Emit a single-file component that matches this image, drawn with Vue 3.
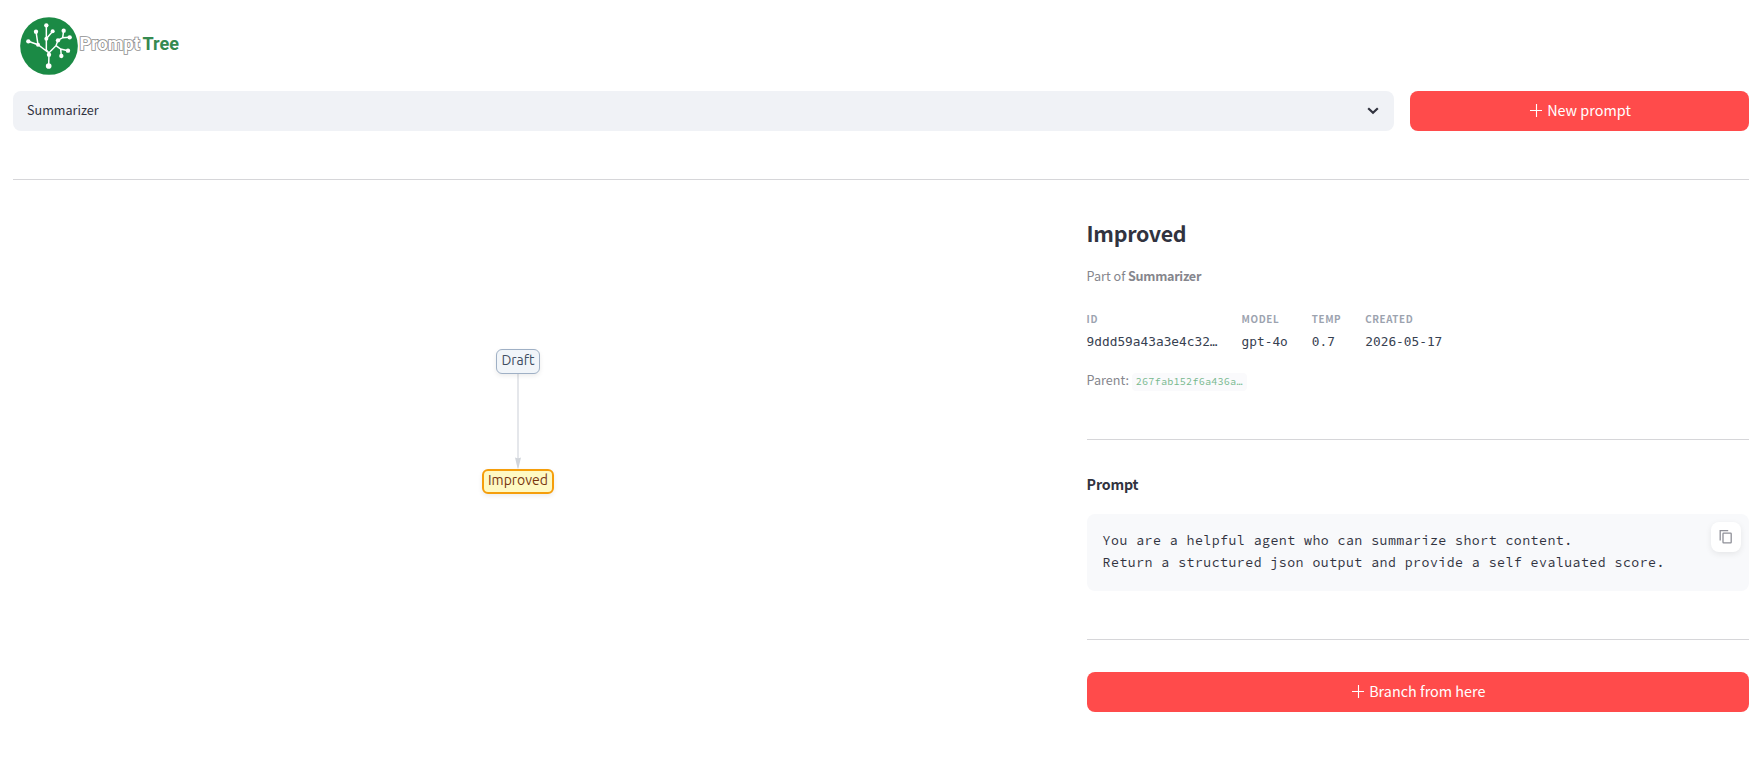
<template>
  <div class="page">
    <header class="brand">
      <svg class="brand-mark" viewBox="59 50 174 174">
        <circle class="brand-disc" cx="146" cy="137" r="86.5" />
        <path
          class="brand-branch"
          d="M145 197 L146 158 L138 149 V75 M138 115 L157 93 M146 158 L113 133 L84 123 M113 133 L107 94 M146 157 L167 136 L173 120 L187 112 L208 111 M187 112 L190 91 M167 136 L181 146 L203 151 M181 146 L183 167"
        />
        <circle v-for="(dot, i) in dots" :key="i" class="brand-dot" :cx="dot[0]" :cy="dot[1]" :r="dot[2]" />
      </svg>
      <svg class="brand-name" width="104" height="30" viewBox="0 0 104 30">
        <text class="brand-prompt" x="1.5" y="19.5" textLength="60.5" lengthAdjust="spacingAndGlyphs">Prompt</text>
        <text class="brand-tree" x="64.5" y="19.5" textLength="36.5" lengthAdjust="spacingAndGlyphs">Tree</text>
      </svg>
    </header>

    <div class="toolbar">
      <div class="select">
        <span>{{ project }}</span>
        <svg class="chevron" width="12" height="8" viewBox="0 0 12 8">
          <path d="M1.2 1.2 L6 5.8 L10.8 1.2" />
        </svg>
      </div>
      <button class="btn btn-new">
        <svg class="plus" width="12" height="13" viewBox="0 0 12 13"><path d="M0 6.5H12M6.5 0V13" /></svg>
        <span>New prompt</span>
      </button>
    </div>

    <hr class="divider" />

    <main class="columns">
      <section class="canvas">
        <svg class="edge" width="12" height="96" viewBox="0 0 12 96">
          <path class="edge-line" d="M6 0V86" />
          <path class="edge-arrow" d="M3 84.5 Q6 86 9 84.5 L6.4 95.5 H5.6 Z" />
        </svg>
        <div class="node node-draft">Draft</div>
        <div class="node node-active">Improved</div>
      </section>

      <section class="detail">
        <h3 class="title">Improved</h3>
        <p class="caption part-of">Part of <b>{{ project }}</b></p>

        <div class="meta">
          <div v-for="item in meta" :key="item.label">
            <div class="meta-label">{{ item.label }}</div>
            <div class="meta-value">{{ item.value }}</div>
          </div>
        </div>

        <p class="caption parent">Parent: <code>267fab152f6a436a…</code></p>

        <hr class="divider" />

        <p class="prompt-heading">Prompt</p>
        <div class="code-box">
          <pre>{{ promptText }}</pre>
          <button class="copy">
            <svg width="14" height="16" viewBox="0 0 14 16">
              <path d="M1.2 11.5V1.7H9.2" />
              <rect x="4" y="4.2" width="8.2" height="9.6" rx="0.6" />
            </svg>
          </button>
        </div>

        <hr class="divider" />

        <button class="btn">
          <svg class="plus" width="12" height="13" viewBox="0 0 12 13"><path d="M0 6.5H12M6.5 0V13" /></svg>
          <span>Branch from here</span>
        </button>
      </section>
    </main>
  </div>
</template>

<script setup>
import { ref } from "vue";

const project = ref("Summarizer");

const meta = [
  { label: "ID", value: "9ddd59a43a3e4c32…" },
  { label: "MODEL", value: "gpt-4o" },
  { label: "TEMP", value: "0.7" },
  { label: "CREATED", value: "2026-05-17" },
];

const promptText = `You are a helpful agent who can summarize short content.
Return a structured json output and provide a self evaluated score.`;

// logo dots: x, y, radius
const dots = [
  [138, 75, 6.5],
  [107, 94, 6.5],
  [84, 123, 6.5],
  [113, 133, 6],
  [138, 115, 6],
  [157, 93, 6],
  [190, 91, 6.5],
  [208, 111, 6.5],
  [173, 120, 6.5],
  [203, 151, 6.5],
  [183, 167, 6.5],
  [146, 163, 6.5],
  [145, 197, 8.5],
];
</script>

<style>
body {
  background: #fff;
}
</style>

<style scoped>
.page {
  box-sizing: border-box;
  height: 100vh;
  padding: 16px 14px 0 13px;
  overflow: hidden;
  color: #31333f;
  font-family: "Source Sans Pro", "Noto Sans CJK SC", sans-serif;
  font-size: 14.4px;
}

.brand {
  display: flex;
  height: 75px;
  padding-left: 7px;
}

.brand-mark {
  width: 58px;
  height: 58px;
  margin-top: 1px;
}

.brand-disc {
  fill: #1b8a45;
}

.brand-branch {
  fill: none;
  stroke: #fff;
  stroke-width: 4.5;
}

.brand-dot {
  fill: #fff;
}

.brand-name {
  margin-top: 14px;
  font-family: Roboto, sans-serif;
  font-size: 18.5px;
  font-weight: 700;
}

.brand-prompt {
  fill: #fff;
  stroke: #8f8f8f;
  stroke-width: 1.7;
  paint-order: stroke;
}

.brand-tree {
  fill: #358a50;
}

.toolbar {
  display: flex;
  gap: 16px;
  height: 40px;
}

.select {
  box-sizing: border-box;
  display: flex;
  flex: 1;
  align-items: center;
  justify-content: space-between;
  padding: 0 15px 0 14px;
  border-radius: 8px;
  background: #f0f2f6;
  font-size: 12.6px;
}

.select span {
  padding-bottom: 3px;
}

.chevron path {
  fill: none;
  stroke: #31333f;
  stroke-width: 2.2;
}

.btn {
  box-sizing: border-box;
  display: flex;
  align-items: center;
  justify-content: center;
  gap: 5px;
  width: 100%;
  height: 40px;
  padding: 0 0 0 2px;
  border: 0;
  border-radius: 8px;
  background: #ff4b4b;
  color: #fff;
  font-family: inherit;
  font-size: 14.4px;
}

.btn span {
  padding-bottom: 4px;
}

.btn-new {
  width: 339px;
}

.plus {
  margin-bottom: 2px;
}

.plus path {
  stroke: #fff;
  stroke-width: 1.1;
}

.divider {
  height: 1px;
  margin: 48px 0 0;
  border: 0;
  background: #d6d6d9;
}

.columns {
  display: flex;
}

.canvas {
  position: relative;
  width: 1073.6px;
}

.node {
  position: absolute;
  box-sizing: border-box;
  height: 25px;
  border-radius: 6px;
  box-shadow: 0 2px 5px rgba(0, 0, 0, 0.08);
  font-family: Ubuntu, "Noto Sans", sans-serif;
  font-size: 14px;
  text-align: center;
  white-space: nowrap;
}

.node-draft {
  top: 169px;
  left: 483px;
  width: 44px;
  border: 1.5px solid #9fb0c5;
  background: #f1f5f9;
  color: #3f4d61;
  line-height: 21px;
}

.node-active {
  top: 289px;
  left: 469px;
  width: 72px;
  border: 2px solid #f59e0b;
  background: #fef9c3;
  color: #78350f;
  line-height: 19px;
}

.edge {
  position: absolute;
  top: 193px;
  left: 499px;
}

.edge-line {
  stroke: #e5e7eb;
  stroke-width: 2;
}

.edge-arrow {
  fill: #d1d5db;
}

.detail {
  width: 662.4px;
}

.title {
  height: 28px;
  margin: 39px 0 0;
  font-size: 21.4px;
  font-weight: 600;
  letter-spacing: -0.3px;
  line-height: 28px;
}

.caption {
  margin: 0;
  color: #85868d;
  font-size: 12.6px;
  line-height: 20px;
}

.caption b {
  letter-spacing: -0.3px;
}

.part-of {
  margin-top: 19px;
}

.meta {
  display: flex;
  gap: 24px;
  height: 40px;
  margin-top: 24px;
}

.meta-label {
  color: #9ca3af;
  font-size: 9.8px;
  font-weight: 600;
  letter-spacing: 0.6px;
  line-height: 18px;
}

.meta-value {
  margin-top: 4px;
  color: #374151;
  font-family: "DejaVu Sans Mono", monospace;
  font-size: 12.8px;
  line-height: 20px;
}

.parent {
  height: 20px;
  margin-top: 20px;
}

.parent code {
  display: inline-block;
  padding: 0 4px;
  border-radius: 4px;
  background: #fafafc;
  color: #76b88d;
  font-family: "Source Code Pro", "DejaVu Sans Mono", monospace;
  font-size: 10.2px;
  letter-spacing: 0.18px;
  line-height: 18px;
}

.parent + .divider {
  margin-top: 49px;
}

.prompt-heading {
  height: 24px;
  margin: 32px 0 0;
  font-size: 14.2px;
  font-weight: 700;
  letter-spacing: -0.15px;
  line-height: 24px;
}

.code-box {
  position: relative;
  box-sizing: border-box;
  height: 77px;
  margin-top: 18px;
  padding: 16px;
  border-radius: 8px;
  background: #f8f9fb;
}

.code-box pre {
  margin: 0;
  font-family: "Source Code Pro", "DejaVu Sans Mono", monospace;
  font-size: 13.2px;
  letter-spacing: 0.48px;
  line-height: 22.4px;
}

.copy {
  position: absolute;
  top: 8px;
  right: 8px;
  display: flex;
  align-items: center;
  justify-content: center;
  width: 30px;
  height: 30px;
  padding: 0;
  border: 0;
  border-radius: 8px;
  background: #fff;
  box-shadow: 0 2px 6px rgba(0, 0, 0, 0.08);
}

.copy path,
.copy rect {
  fill: none;
  stroke: #8f9098;
  stroke-width: 1.3;
}

.detail .btn {
  margin-top: 32px;
}
</style>
